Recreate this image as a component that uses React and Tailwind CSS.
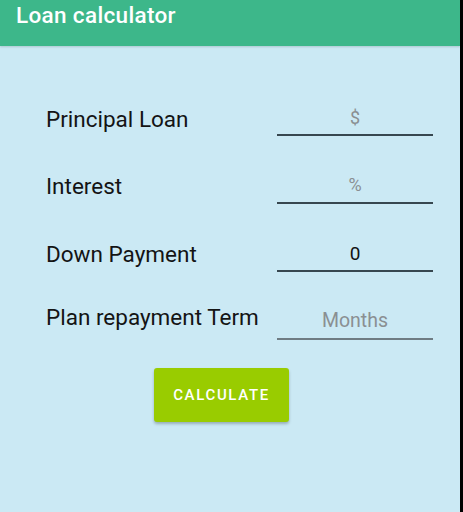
import React from "react";

const rows = [
  { label: "Principal Loan", value: "$", placeholder: true, lpb: "pb-[5px]", vpb: "pb-[4px]", vsize: "text-[18px]", line: "border-[#37474f]" },
  { label: "Interest", value: "%", placeholder: true, lpb: "pb-[6px]", vpb: "pb-[5px]", vsize: "text-[18px]", line: "border-[#37474f]" },
  { label: "Down Payment", value: "0", placeholder: false, lpb: "pb-[6px]", vpb: "pb-[4px]", vsize: "text-[19px]", line: "border-[#37474f]" },
  { label: "Plan repayment Term", value: "Months", placeholder: true, lpb: "pb-[11px]", vpb: "pb-[5px]", vsize: "text-[19.5px]", line: "border-[#6f7c83]" },
];

export default function App() {
  return (
    <div className="flex h-[512px] w-full" style={{ fontFamily: "Roboto, 'Noto Sans', sans-serif" }}>
      <div className="flex flex-1 flex-col bg-[#cbe9f4]">
        <div className="h-[46px] bg-[#3db78a] pl-[16px] pt-[1px] shadow-[0_1px_2px_rgba(0,0,0,0.15)]">
          <h1 className="text-[22.5px] font-medium leading-[28px] tracking-[0.015em] text-white">Loan calculator</h1>
        </div>
        <div className="mt-[22px] flex flex-col pl-[46px]">
          {rows.map((r) => (
            <div key={r.label} className="flex h-[68px] items-end">
              <div className={`w-[231px] text-[22.5px] leading-6 text-[#141414] ${r.lpb}`}>{r.label}</div>
              <div
                className={`w-[156px] border-b-2 text-center leading-6 ${r.line} ${r.vpb} ${r.vsize} ${
                  r.placeholder ? "text-[#8a8f92]" : "text-[#111]"
                }`}
              >
                {r.value}
              </div>
            </div>
          ))}
          <div className="ml-[108px] mt-[28px]">
            <button className="flex h-[54px] w-[135px] items-center justify-center rounded-[3px] bg-[#99cc00] text-[15px] font-medium tracking-[0.11em] text-white shadow-[0_2px_3px_rgba(0,0,0,0.25)]">
              CALCULATE
            </button>
          </div>
        </div>
      </div>
      <div className="w-[3px] bg-black" />
    </div>
  );
}
